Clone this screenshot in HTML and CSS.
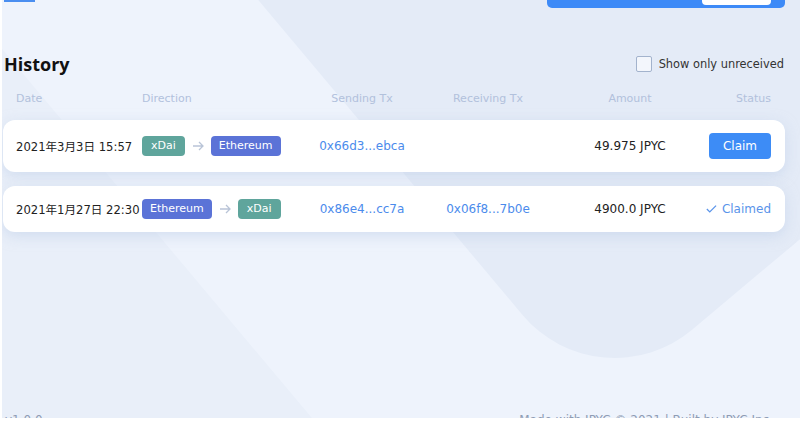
FILE: index.html
```html
<!DOCTYPE html>
<html lang="ja">
<head>
    <meta charset="UTF-8" />
    <meta name="viewport" content="width=device-width, initial-scale=1.0" />
    <title>JPYC Bridge - History</title>
    <link rel="stylesheet" href="styles.css">
</head>
<body>
    <div class="page">
        <div class="topbar">
            <div class="tab-line"></div>
            <div class="wallet-bar"><div class="wallet-inner"></div></div>
        </div>

        <div class="history-head">
            <h1>History</h1>
            <label class="filter">
                <span class="checkbox"></span>
                Show only unreceived
            </label>
        </div>

        <div class="cols">
            <span>Date</span>
            <span>Direction</span>
            <span class="center">Sending Tx</span>
            <span class="center">Receiving Tx</span>
            <span class="center">Amount</span>
            <span class="right">Status</span>
        </div>

        <div class="row row-tall">
            <span class="date">2021年3月3日 15:57</span>
            <span class="direction">
                <span class="chain xdai">xDai</span>
                <svg class="arrow" width="12" height="10" viewBox="0 0 12 10"><path d="M1 5h10M7 1l4 4-4 4" /></svg>
                <span class="chain eth">Ethereum</span>
            </span>
            <a class="tx center" href="#">0x66d3...ebca</a>
            <span class="center"></span>
            <span class="amount center">49.975 JPYC</span>
            <span class="right"><button class="claim-btn">Claim</button></span>
        </div>

        <div class="row">
            <span class="date">2021年1月27日 22:30</span>
            <span class="direction">
                <span class="chain eth">Ethereum</span>
                <svg class="arrow" width="12" height="10" viewBox="0 0 12 10"><path d="M1 5h10M7 1l4 4-4 4" /></svg>
                <span class="chain xdai">xDai</span>
            </span>
            <a class="tx center" href="#">0x86e4...cc7a</a>
            <a class="tx center" href="#">0x06f8...7b0e</a>
            <span class="amount center">4900.0 JPYC</span>
            <span class="right claimed">
                <svg width="13" height="10" viewBox="0 0 13 10"><path d="M1 5l3.5 3.5L12 1" /></svg>
                Claimed
            </span>
        </div>

        <div class="footer">
            <span>v1.0.0</span>
            <span class="footer-links">Made with JPYC &copy; 2021 | Built by JPYC Inc.</span>
        </div>
    </div>
</body>
</html>
```

FILE: styles.css
```css
body {
    margin: 0;
    background-color: #fff;
    font-family: "DejaVu Sans", "Noto Sans CJK JP", sans-serif;
    font-size: 12px;
    color: #222;
}

.page {
    position: relative;
    z-index: 0;
    display: flex;
    flex-direction: column;
    height: 418px;
    margin-left: 2px;
    padding: 0 15px 0 1px;
    overflow: hidden;
    background-color: #eef3fc;
}

/* decorative background shapes */
.page::before,
.page::after {
    content: "";
    position: absolute;
    z-index: -1;
    transform: rotate(-40deg);
}

.page::before {
    left: -774px;
    top: 0;
    width: 1000px;
    height: 1000px;
    border-radius: 150px;
    background-color: #e9eff9;
}

.page::after {
    left: 291px;
    top: -436px;
    width: 700px;
    height: 700px;
    border-radius: 120px;
    background-color: #e4ebf7;
}

.topbar {
    display: flex;
    justify-content: space-between;
    height: 8px;
}

.tab-line {
    width: 31px;
    height: 2px;
    margin-left: 1px;
    background-color: #4a8ef0;
}

.wallet-bar {
    width: 238px;
    height: 8px;
    border-radius: 0 0 5px 5px;
    background-color: #3d8af7;
}

.wallet-inner {
    width: 69px;
    height: 5px;
    margin-left: 155px;
    border-radius: 0 0 4px 4px;
    background-color: #fff;
}

.history-head {
    display: flex;
    justify-content: space-between;
    align-items: center;
    margin-top: 46px;
    padding-left: 1px;
}

h1 {
    margin: 0;
    font-family: "Open Sans", sans-serif;
    font-size: 18px;
    font-weight: bold;
    line-height: 20px;
    color: #111;
}

.filter {
    display: flex;
    align-items: center;
    gap: 7px;
    margin-right: 1px;
    font-size: 11.4px;
    color: #333;
}

.checkbox {
    width: 14px;
    height: 14px;
    border: 1px solid #a3b3cd;
    border-radius: 2px;
    background-color: #f3f6fc;
}

.cols,
.row {
    display: grid;
    grid-template-columns: 126px 160px 120px 132px 152px 65px;
    align-items: center;
    padding: 0 14px 0 13px;
}

.cols {
    margin-top: 18px;
    margin-bottom: 15px;
    font-size: 11px;
    color: #b2c1dc;
}

.center {
    text-align: center;
}

.right {
    text-align: right;
}

.row {
    height: 20px;
    padding-top: 13px;
    padding-bottom: 13px;
    margin-bottom: 14px;
    border-radius: 12px;
    background-color: #fff;
    box-shadow: 0 4px 14px rgba(190, 206, 232, 0.55);
}

.row-tall {
    height: 26px;
}

.date {
    font-size: 11.6px;
    white-space: nowrap;
}

.direction {
    display: flex;
    align-items: center;
    gap: 7px;
}

.chain {
    height: 20px;
    padding: 0 8px;
    border-radius: 4px;
    font-size: 11px;
    line-height: 20px;
    color: #fff;
}

.xdai {
    padding: 0 9px;
    background-color: #5fa59c;
}

.eth {
    background-color: #5b73d7;
}

.arrow path {
    fill: none;
    stroke: #b9c4d7;
    stroke-width: 1.3;
}

.tx {
    color: #4b8bec;
    text-decoration: none;
}

.claim-btn {
    width: 62px;
    height: 26px;
    border: none;
    border-radius: 4px;
    background-color: #3d8cf6;
    font-family: inherit;
    font-size: 12px;
    color: #fff;
    cursor: pointer;
}

.claimed {
    display: flex;
    justify-content: flex-end;
    align-items: center;
    gap: 5px;
    color: #5a94ea;
}

.claimed path {
    fill: none;
    stroke: #5a94ea;
    stroke-width: 1.5;
}

.footer {
    display: flex;
    justify-content: space-between;
    margin-top: auto;
    margin-bottom: -9px;
    padding-left: 2px;
    font-size: 12px;
    line-height: 14px;
    color: #8f9cb4;
}

.footer-links {
    margin-right: 12px;
}
```
